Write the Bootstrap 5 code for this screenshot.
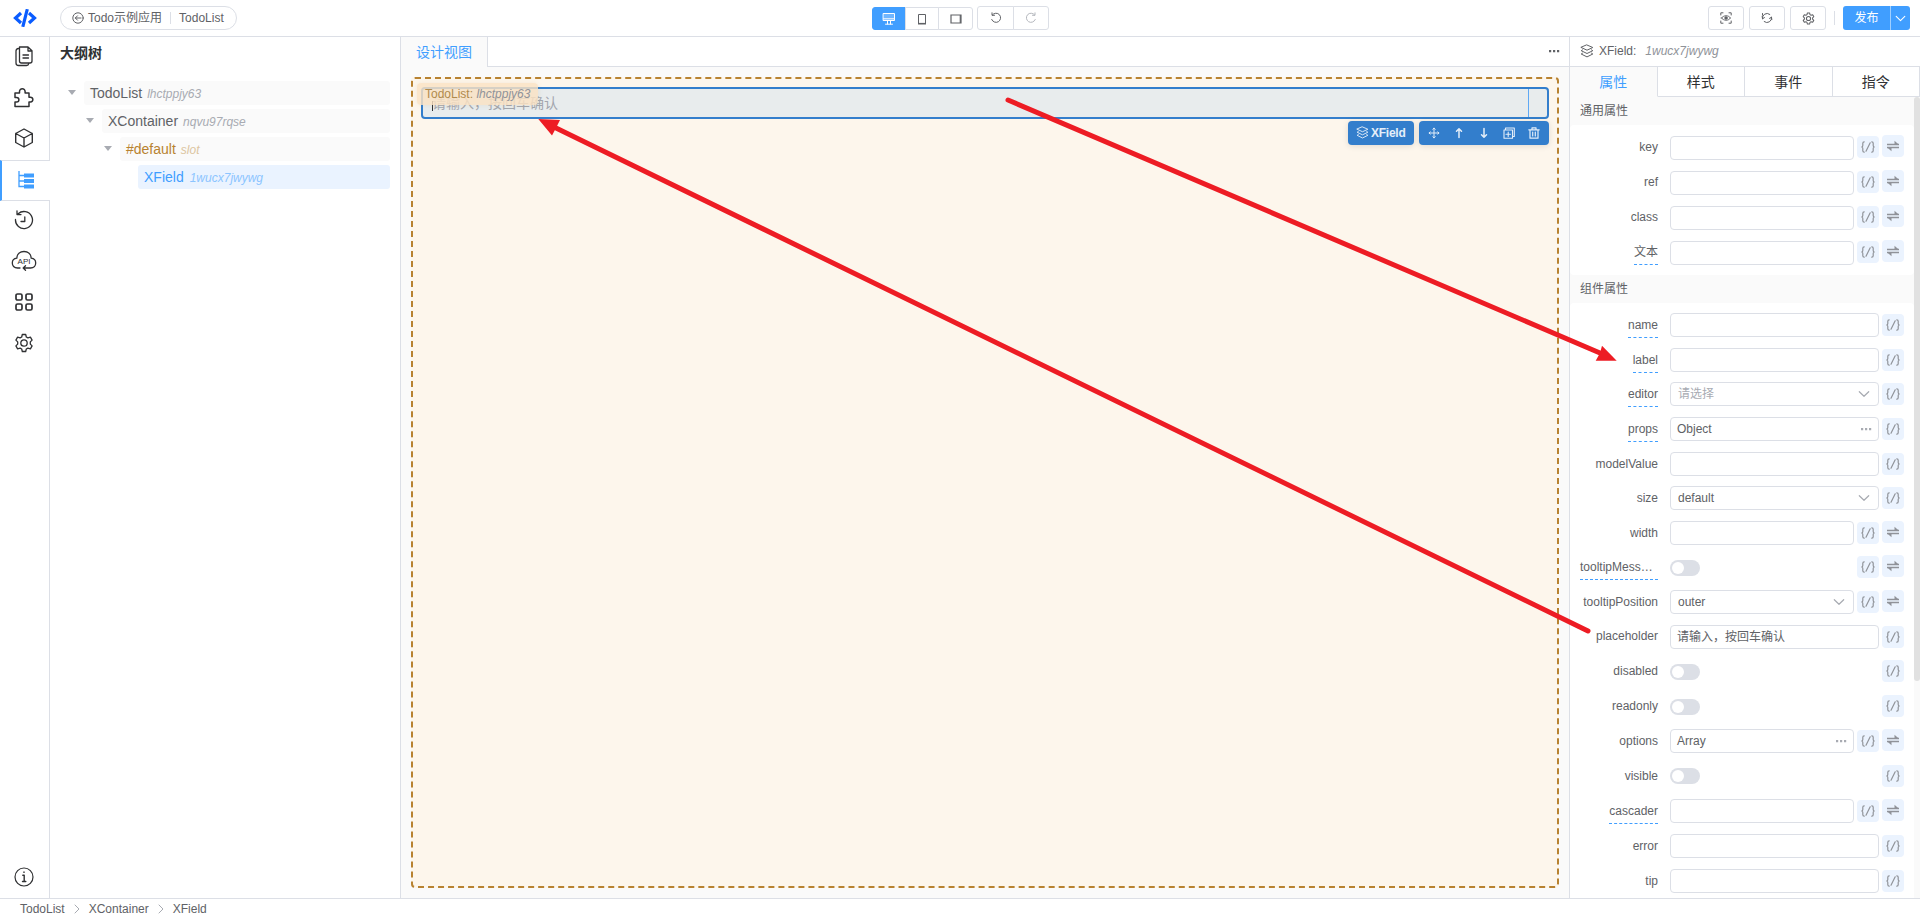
<!DOCTYPE html>
<html lang="zh-CN" data-bs-theme="light">
<head>
<meta charset="utf-8">
<meta name="viewport" content="width=device-width, initial-scale=1">
<title>TodoList</title>
<link href="https://cdn.jsdelivr.net/npm/bootstrap@5.3.0/dist/css/bootstrap.min.css" rel="stylesheet">
<style>
:root{--line:#dcdfe6;--blue:#409eff;--txt:#606266}
body{font-family:"Liberation Sans","Noto Sans CJK SC",sans-serif;font-size:12px;line-height:1.5;color:var(--txt);background:#fff}
svg{display:block;flex:none}
.ico{fill:none;stroke:currentColor;stroke-linecap:round;stroke-linejoin:round}
.topbar{height:37px;border-bottom:1px solid var(--line);padding:6px 10px 0 12px}
.logo{width:26px;height:18px;margin-top:3px}
.crumb-pill{margin-left:22px;width:177px;height:24px;border:1px solid var(--line);border-radius:12px;padding-left:11px}
.crumb-pill .sep{width:1px;height:12px;background:var(--line);margin:0 8px}
.topcenter{left:872px;top:6px}
.btn-group .tool,.tool{height:24px;width:36px;border:1px solid var(--line);border-radius:3px;background:#fff;color:var(--txt);padding:0;display:flex;align-items:center;justify-content:center}
.btn-group.dev .tool{height:23px;margin-top:1px;width:34px}
.btn-group.dev .tool.on{background:var(--blue);border-color:var(--blue);color:#fff}
.btn-group.dev .tool.mid{width:34px}
.btn-group.dev .tool.last{width:35px}
.btn-group.hist{margin-left:4px}
.btn-group.hist .tool.undo{width:37px}
.btn-group.hist .tool.redo{color:#b4b7bd}
.vline{width:1px;height:14px;background:var(--line)}
.publish{background:var(--blue);color:#fff;height:24px;border-radius:3px;width:67px;font-size:12px}
.publish span{width:47px;text-align:center;line-height:24px}
.publish i{width:20px;height:24px;border-left:1px solid #a0cfff}
.rail{width:50px}
.rail .item{height:41px;border-right:1px solid var(--line);display:flex;align-items:center;justify-content:center;color:#303133;padding:0 1px 2px 0}
.rail .item.on{border:1px solid var(--line);border-right:0;border-left:2px solid var(--blue);color:var(--blue);padding:0 0 1px}
.rail .fill{border-right:1px solid var(--line)}
.outline{width:351px;border-right:1px solid var(--line)}
.outline h2{font-size:14px;font-weight:700;color:#303133;margin:0;padding:6px 0 0 10px;height:44px;line-height:21px}
.node{height:24px;margin:0 10px 4px 0;font-size:14px}
.node .caret{width:0;height:0;border:4px solid transparent;border-top:5px solid #a8abb2;border-bottom:0;margin-right:8px}
.node .bar{background:#fafafa;border-radius:3px;height:24px;padding-left:6px;line-height:24px}
.node em{font-size:12px;color:#a8abb2;margin-left:5px}
.node.slotn .bar{color:#b88230}.node.slotn em{color:#dcc5a0}
.node.sel .bar{background:#eaf3ff;color:var(--blue)}.node.sel em{color:#8cc5ff}
.work{background:#fafafa}
.tabline{height:30px;background:#fff}
.tabline .tab1{width:87px;border-right:1px solid var(--line);background:#fafafa;color:var(--blue);font-size:14px;line-height:30px;padding-left:15px}
.tabline .rest{border-bottom:1px solid var(--line);padding-right:9px}
.stage{margin:10px;border:2px dashed #b88230;border-radius:4px;background:#fdf6ec;padding:8px}
.field{height:32px;border:2px solid #337ecc;border-radius:4px;background:#e8eced;color:#a3a6ad;font-size:14px}
.field .ph{padding:4px 0 0 9px;line-height:21px}
.field .cursor{left:9px;top:12px;width:1px;height:10px;background:#303133}
.field .edge{right:18px;top:0;width:1px;height:28px;background:#5fa9f5}
.nametag{left:4px;top:4px;width:121px;height:22px;border-radius:4px;background:rgba(250,226,195,.82);box-shadow:0 0 5px rgba(184,130,48,.12);color:#b08a4d;line-height:22px;padding-left:8px;white-space:nowrap}
.nametag em{color:#909399}
.actions{right:8px;top:42px;gap:5px}
.actions>div{background:#337ecc;color:#e4eef9;border-radius:4px;height:24px;box-shadow:0 1px 6px rgba(0,0,0,.12)}
.props{width:351px;border-left:1px solid var(--line);background:#fafafa}
.props .head{height:30px;border-bottom:1px solid var(--line);background:#fff;padding-left:10px}
.ptabs div{flex:1 1 0;height:30px;line-height:31px;text-align:center;font-size:14px;color:#303133;background:#fff;border-right:1px solid var(--line);border-bottom:1px solid var(--line)}
.ptabs div.on{color:var(--blue);background:#fafafa;border-bottom-color:#fafafa}
.sect{height:28px;line-height:29px;padding-left:10px;color:var(--txt)}
.pane{width:344px}
.formbox{background:#fff;border-radius:4px;padding:10px 10px 0}
.formbox.g1{padding-top:11px;height:150px}
.scrollcol{width:6px;background:#fafafa}
.scrollcol div{height:584px;background:#e1e1e1;border-radius:3px}
.r{height:35px;display:flex;align-items:flex-start}
.r.s{height:34px}
.r .lb{width:78px;margin:1px 12px 0 0;display:flex;justify-content:flex-end}
.r .lb span{line-height:23px;height:24px;white-space:nowrap}
.r .lb.u span{border-bottom:1px dashed var(--blue)}
.r .inp{flex:1;height:24px;border:1px solid var(--line);border-radius:4px;line-height:22px;padding:0 8px 0 6px;display:flex;justify-content:space-between;align-items:center;background:#fff}
.r .inp.opt{padding-left:7px}
.r .inp.obj{padding-right:6px}
.r .inp svg{color:#a8abb2}
.r .sw{width:30px;height:16px;border-radius:8px;background:var(--line);margin:5px auto 0 0;padding:2px}
.r .sw.up{margin-top:4px}
.r .sw::before{content:"";display:block;width:12px;height:12px;border-radius:6px;background:#fff}
.r b{width:22px;height:22px;margin:1px 0 0 3px;background:#ebf3fe;border-radius:4px;color:#909399;flex:none;display:flex;align-items:center;justify-content:center}
.r b.w{margin-top:0}
.g1 .r .lb,.g1 .r b{margin-top:0}.g1 .r b.w{margin-top:-1px}
.foot{height:21px;border-top:1px solid var(--line);padding-left:20px}
.foot svg{color:#a8abb2;margin:0 6px}
.arrows{left:0;top:0;pointer-events:none}
</style>
</head>
<body class="vh-100 overflow-hidden d-flex flex-column position-relative">
<svg width="0" height="0" class="position-absolute">
<symbol id="br" viewBox="0 0 14 14"><path class="ico" stroke-width="1.200" d="M3.200 1.800Q1.800 1.800 1.800 3.200V5.500Q1.800 6.700.8 7 1.800 7.300 1.800 8.500V10.800Q1.800 12.200 3.200 12.200M10.800 1.800Q12.200 1.800 12.200 3.200V5.500Q12.200 6.700 13.200 7 12.200 7.300 12.200 8.500V10.800Q12.200 12.200 10.800 12.200M9.200 2.800 5 11.200"/></symbol>
<symbol id="swp" viewBox="0 0 14 12"><path fill="none" stroke="currentColor" stroke-width="1.400" d="M1 4.500H13M1 7.500h12"/><path fill="currentColor" d="M8.500.800 13 4.800H8.500zM5.500 11.200 1 7.200h4.500z"/></symbol>
<symbol id="chev" viewBox="0 0 12 12"><path class="ico" stroke-width="1.200" d="M1.300 3.700 6 8.300l4.700-4.600"/></symbol>
<symbol id="dots" viewBox="0 0 12 12"><path fill="currentColor" d="M1 5h2.200v2.200H1zM5 5h2.200v2.200H5zM9 5h2.200v2.200H9z"/></symbol>
<symbol id="layers" viewBox="0 0 14 14"><path class="ico" stroke-width="1" d="M7 1 12.800 3.500 7 6.200 1.200 3.500zM2.500 5.900 1.200 6.700 7 9.500 12.800 6.700 11.500 5.900M2.500 9.200 1.200 10 7 12.900 12.800 10 11.500 9.200"/></symbol>
<symbol id="gear" viewBox="0 0 20 20"><path class="ico" d="M8.300 1.500h3.400l.6 2.500 1.600.9 2.500-.7 1.700 2.900-1.800 1.800v2.200l1.800 1.800-1.700 2.900-2.500-.7-1.600.9-.6 2.500H8.300L7.700 16l-1.600-.9-2.500.7-1.700-2.900 1.800-1.800V8.900L1.900 7.100l1.700-2.900 2.500.7L7.700 4z"/><circle class="ico" cx="10" cy="10" r="3.200"/></symbol>
</svg>

<header class="topbar d-flex align-items-start position-relative">
  <svg class="logo" viewBox="0 0 26 18" fill="none" stroke="#0a5cff" stroke-width="3.200"><path d="M9 4 3.500 9 9 14M17 4l5.500 5L17 14M15.300.2 10.800 17.800"/></svg>
  <div class="crumb-pill d-flex align-items-center">
    <svg width="12" height="12" viewBox="0 0 12 12" class="ico"><circle cx="6" cy="6" r="5.200"/><path d="M9 6H3.300M5.500 3.800 3.300 6l2.200 2.200"/></svg>
    <span class="ms-1">Todo示例应用</span><span class="sep"></span><span>TodoList</span>
  </div>
  <div class="topcenter position-absolute d-flex">
    <div class="btn-group dev">
      <button class="btn tool on"><svg width="14" height="14" viewBox="0 0 14 14" class="ico"><path fill="#fff" fill-opacity=".25" d="M1.500 1.500h11v7h-11z"/><path d="M1.500 6.800h11M5.500 9v3M8.500 9v3M3.500 12.200h7"/></svg></button>
      <button class="btn tool mid"><svg width="12" height="14" viewBox="0 0 12 14" fill="none" stroke="currentColor"><path d="M2.500 2.500h7v9h-7z"/><path stroke-width="1.600" d="M2 11.700h8"/></svg></button>
      <button class="btn tool last"><svg width="14" height="12" viewBox="0 0 14 12" fill="none" stroke="currentColor"><path stroke-width="1.200" d="M2 2h10v8H2z"/><path stroke-width="1.200" d="M11.300 2v8"/></svg></button>
    </div>
    <div class="btn-group hist">
      <button class="btn tool undo"><svg width="12" height="12" viewBox="0 0 12 12" class="ico"><path d="M2.300 3A4.600 4.600 0 1 1 1.700 7.500M2 .8v2.500H4.500"/></svg></button>
      <button class="btn tool redo"><svg width="12" height="12" viewBox="0 0 12 12" class="ico"><path d="M9.700 3A4.600 4.600 0 1 0 10.300 7.500M10 .8v2.500H7.500"/></svg></button>
    </div>
  </div>
  <div class="ms-auto d-flex align-items-center">
    <button class="tool"><svg width="12" height="12" viewBox="0 0 12 12" class="ico"><path d="M.8 3V.8H3M9 .8h2.200V3M11.200 9v2.200H9M3 11.200H.8V9M1.500 6c2-3 7-3 9 0-2 3-7 3-9 0z"/><circle cx="6" cy="6" r="1.200" fill="currentColor"/></svg></button>
    <button class="tool" style="margin-left:5px"><svg width="12" height="12" viewBox="0 0 12 12" class="ico"><path d="M1.500 6.800A4.600 4.600 0 0 1 8.800 2.400M10.500 5.200A4.600 4.600 0 0 1 3.200 9.600M1.500 3.200V1.500M1.200 4.300 1.500 6.800 3.500 5.600M10.800 7.700 10.500 5.200 8.500 6.400" /></svg></button>
    <button class="tool" style="margin-left:5px"><svg width="13" height="13" stroke-width="1.600"><use href="#gear"/></svg></button>
    <span class="vline mx-2"></span>
    <div class="publish d-flex"><span>发布</span><i class="d-flex align-items-center justify-content-center"><svg width="11" height="11"><use href="#chev"/></svg></i></div>
  </div>
</header>

<main class="d-flex flex-grow-1" style="min-height:0">
  <nav class="rail d-flex flex-column">
    <div class="item"><svg width="20" height="22" viewBox="0 0 20 22" class="ico" stroke-width="1.300"><path d="M5.500 2h8.500L18 5.800V16q0 2-2 2H7.500q-2 0-2-2V2M14 2.300V6h3.700M9 10h5.500M9 13h5.500M4.500 3.500Q2 3.500 2 6V18q0 2.500 2.500 2.500H12.500q2 0 2.300-2"/></svg></div>
    <div class="item"><svg width="22" height="22" viewBox="0 0 22 22" class="ico" stroke-width="1.500"><path d="M2 7h4.500V5.500a2.800 2.800 0 1 1 5.600 0V7H16v4.200h1.500a2.300 2.300 0 1 1 0 4.700H16V20.500H2V16h1.600a2.300 2.300 0 1 0 0-4.600H2z"/></svg></div>
    <div class="item"><svg width="20" height="20" viewBox="0 0 20 20" class="ico" stroke-width="1.400"><path d="M10 1l8.300 4.500v9L10 19l-8.300-4.500v-9zM1.700 5.500 10 10l8.300-4.500M10 10v9"/></svg></div>
    <div class="item on"><svg width="18" height="20" viewBox="0 0 18 20"><path fill="none" stroke="currentColor" stroke-width="1.300" d="M2 1v15.500h5M2 5.500h5M2 11h5"/><path fill="currentColor" d="M7 3.500h10v4H7zM7 9h10v4H7zM7 14.500h10v4H7z"/></svg></div>
    <div class="item"><svg width="20" height="20" viewBox="0 0 20 20" class="ico" stroke-width="1.300"><path d="M4.200 3.800A8.500 8.500 0 1 1 1.500 9.500M3 .8v3.800h4M10.800 7v4.500H7"/></svg></div>
    <div class="item"><svg width="26" height="22" viewBox="0 0 26 22" class="ico" stroke-width="1.300"><path d="M9 18H6.500C3 18 1.300 15.500 1.300 13S3 8.500 5.800 8.200C6 4 9 1.500 13 1.500s7 2.500 7.200 6.700c2.800.3 4.500 2.300 4.500 4.800s-1.700 5-5.200 5H12.500M14.500 15.800 12.200 18l2.300 2.200"/><text x="13" y="14" text-anchor="middle" font-size="8" fill="currentColor" stroke="none">API</text></svg></div>
    <div class="item"><svg width="20" height="20" viewBox="0 0 20 20" class="ico" stroke-width="1.700"><rect x="2" y="2" width="6" height="6" rx="1.500"/><rect x="12" y="2" width="6" height="6" rx="1.500"/><rect x="2" y="12" width="6" height="6" rx="1.500"/><rect x="12" y="12" width="6" height="6" rx="1.500"/></svg></div>
    <div class="item"><svg width="20" height="20" stroke-width="1.300"><use href="#gear"/></svg></div>
    <div class="fill flex-grow-1"></div>
    <div class="item"><svg width="20" height="20" viewBox="0 0 20 20" class="ico" stroke-width="1.200"><circle cx="10" cy="10" r="9"/><path stroke-width="1.400" d="M10 5v.4M8.800 8.200H10.200V14.500M8.500 14.500h3.300"/></svg></div>
  </nav>

  <aside class="outline">
    <h2>大纲树</h2>
    <div class="node d-flex align-items-center" style="padding-left:18px"><span class="caret"></span><div class="bar flex-grow-1">TodoList<em>lhctppjy63</em></div></div>
    <div class="node d-flex align-items-center" style="padding-left:36px"><span class="caret"></span><div class="bar flex-grow-1">XContainer<em>nqvu97rqse</em></div></div>
    <div class="node slotn d-flex align-items-center" style="padding-left:54px"><span class="caret"></span><div class="bar flex-grow-1">#default<em>slot</em></div></div>
    <div class="node sel d-flex align-items-center" style="padding-left:88px"><div class="bar flex-grow-1">XField<em style="margin-left:6px">1wucx7jwywg</em></div></div>
  </aside>

  <section class="work flex-grow-1 d-flex flex-column">
    <div class="tabline d-flex">
      <div class="tab1">设计视图</div>
      <div class="rest flex-grow-1 d-flex align-items-center justify-content-end"><svg width="12" height="12"><use href="#dots"/></svg></div>
    </div>
    <div class="stage flex-grow-1 position-relative">
      <div class="field position-relative"><div class="ph">请输入，按回车确认</div><span class="cursor position-absolute"></span><span class="edge position-absolute"></span></div>
      <div class="nametag position-absolute">TodoList: <em>lhctppjy63</em></div>
      <div class="actions position-absolute d-flex">
        <div class="d-flex align-items-center fw-bold" style="width:66px;padding-left:8px"><svg width="13" height="13"><use href="#layers"/></svg><span style="margin-left:2px;letter-spacing:-.25px">XField</span></div>
        <div class="d-flex align-items-center justify-content-around" style="width:130px;padding:0 3px">
          <svg width="12" height="12" viewBox="0 0 12 12" class="ico"><path d="M6 1.200v9.600M1.200 6h9.600M4.800 2.300 6 1.100l1.200 1.200M4.800 9.700 6 10.900l1.200-1.200M2.300 4.800 1.100 6l1.200 1.200M9.700 4.800 10.900 6 9.700 7.200"/></svg>
          <svg width="12" height="12" viewBox="0 0 12 12" class="ico" stroke-width="1.500"><path d="M6 10.500V2M3.500 4.300 6 1.800l2.500 2.500"/></svg>
          <svg width="12" height="12" viewBox="0 0 12 12" class="ico" stroke-width="1.500"><path d="M6 1.500V10M3.500 7.700 6 10.200l2.500-2.500"/></svg>
          <svg width="12" height="12" viewBox="0 0 12 12" class="ico" stroke-width="1.100"><path d="M1 3h8.500v8.300H1zM2.500 3V1h8.800v8.500H9.500M5.200 5v4.500M3 7.200h4.500"/></svg>
          <svg width="12" height="12" viewBox="0 0 12 12" class="ico" stroke-width="1.200"><path d="M.8 2.800h10.400M4 2.500V.8h4v1.700M2 3v8.200h8V3M4.700 5v4M7.300 5v4"/></svg>
        </div>
      </div>
    </div>
  </section>

  <aside class="props d-flex flex-column">
    <div class="head d-flex align-items-center"><svg width="14" height="14"><use href="#layers"/></svg><span style="margin-left:5px">XField:</span><em style="margin-left:9px;color:#909399">1wucx7jwywg</em></div>
    <div class="ptabs d-flex"><div class="on">属性</div><div>样式</div><div>事件</div><div>指令</div></div>
    <div class="d-flex flex-grow-1 overflow-hidden">
      <div class="pane">
        <div class="sect">通用属性</div>
        <div class="formbox g1">
          <div class="r"><div class="lb"><span>key</span></div><div class="inp"></div><b><svg width="14" height="14"><use href="#br"/></svg></b><b class="w"><svg width="14" height="12"><use href="#swp"/></svg></b></div>
          <div class="r"><div class="lb"><span>ref</span></div><div class="inp"></div><b><svg width="14" height="14"><use href="#br"/></svg></b><b class="w"><svg width="14" height="12"><use href="#swp"/></svg></b></div>
          <div class="r"><div class="lb"><span>class</span></div><div class="inp"></div><b><svg width="14" height="14"><use href="#br"/></svg></b><b class="w"><svg width="14" height="12"><use href="#swp"/></svg></b></div>
          <div class="r"><div class="lb u"><span>文本</span></div><div class="inp"></div><b><svg width="14" height="14"><use href="#br"/></svg></b><b class="w"><svg width="14" height="12"><use href="#swp"/></svg></b></div>
        </div>
        <div class="sect">组件属性</div>
        <div class="formbox">
          <div class="r"><div class="lb u"><span>name</span></div><div class="inp"></div><b><svg width="14" height="14"><use href="#br"/></svg></b></div>
          <div class="r s"><div class="lb u"><span>label</span></div><div class="inp"></div><b><svg width="14" height="14"><use href="#br"/></svg></b></div>
          <div class="r"><div class="lb u"><span>editor</span></div><div class="inp opt"><span style="color:#a8abb2">请选择</span><svg width="12" height="12"><use href="#chev"/></svg></div><b><svg width="14" height="14"><use href="#br"/></svg></b></div>
          <div class="r"><div class="lb u"><span>props</span></div><div class="inp obj"><span>Object</span><svg width="12" height="12"><use href="#dots"/></svg></div><b><svg width="14" height="14"><use href="#br"/></svg></b></div>
          <div class="r s"><div class="lb"><span>modelValue</span></div><div class="inp"></div><b><svg width="14" height="14"><use href="#br"/></svg></b></div>
          <div class="r"><div class="lb"><span>size</span></div><div class="inp opt"><span>default</span><svg width="12" height="12"><use href="#chev"/></svg></div><b><svg width="14" height="14"><use href="#br"/></svg></b></div>
          <div class="r s"><div class="lb"><span>width</span></div><div class="inp"></div><b><svg width="14" height="14"><use href="#br"/></svg></b><b class="w"><svg width="14" height="12"><use href="#swp"/></svg></b></div>
          <div class="r"><div class="lb u"><span class="w-100">tooltipMess…</span></div><div class="sw"></div><b><svg width="14" height="14"><use href="#br"/></svg></b><b class="w"><svg width="14" height="12"><use href="#swp"/></svg></b></div>
          <div class="r"><div class="lb"><span>tooltipPosition</span></div><div class="inp opt"><span>outer</span><svg width="12" height="12"><use href="#chev"/></svg></div><b><svg width="14" height="14"><use href="#br"/></svg></b><b class="w"><svg width="14" height="12"><use href="#swp"/></svg></b></div>
          <div class="r s"><div class="lb" style="margin-top:0"><span>placeholder</span></div><div class="inp"><span>请输入，按回车确认</span></div><b><svg width="14" height="14"><use href="#br"/></svg></b></div>
          <div class="r"><div class="lb"><span>disabled</span></div><div class="sw"></div><b><svg width="14" height="14"><use href="#br"/></svg></b></div>
          <div class="r"><div class="lb"><span>readonly</span></div><div class="sw"></div><b><svg width="14" height="14"><use href="#br"/></svg></b></div>
          <div class="r"><div class="lb"><span>options</span></div><div class="inp obj"><span>Array</span><svg width="12" height="12"><use href="#dots"/></svg></div><b><svg width="14" height="14"><use href="#br"/></svg></b><b class="w"><svg width="14" height="12"><use href="#swp"/></svg></b></div>
          <div class="r"><div class="lb"><span>visible</span></div><div class="sw up"></div><b><svg width="14" height="14"><use href="#br"/></svg></b></div>
          <div class="r"><div class="lb u"><span>cascader</span></div><div class="inp"></div><b><svg width="14" height="14"><use href="#br"/></svg></b><b class="w"><svg width="14" height="12"><use href="#swp"/></svg></b></div>
          <div class="r"><div class="lb"><span>error</span></div><div class="inp"></div><b><svg width="14" height="14"><use href="#br"/></svg></b></div>
          <div class="r s"><div class="lb"><span>tip</span></div><div class="inp"></div><b><svg width="14" height="14"><use href="#br"/></svg></b></div>
        </div>
      </div>
      <div class="scrollcol"><div></div></div>
    </div>
  </aside>
</main>

<footer class="foot d-flex align-items-center">
  <span>TodoList</span><svg width="12" height="12" viewBox="0 0 12 12" class="ico"><path d="M4 2l4 4-4 4"/></svg>
  <span>XContainer</span><svg width="12" height="12" viewBox="0 0 12 12" class="ico"><path d="M4 2l4 4-4 4"/></svg>
  <span>XField</span>
</footer>

<svg class="arrows position-absolute" width="1920" height="919" viewBox="0 0 1920 919" fill="#ed1c24" stroke="#ed1c24" stroke-linecap="round">
  <path stroke-width="5" d="M1008 100 1600 353M1588 631 556 128"/>
  <path stroke="none" d="M1616.700 360.700 1595.700 360.700 1600 353 1602 345.700zM538.300 119 560 120 556 128 552 135.500z"/>
</svg>
<script src="https://cdn.jsdelivr.net/npm/bootstrap@5.3.0/dist/js/bootstrap.bundle.min.js"></script>
</body>
</html>
